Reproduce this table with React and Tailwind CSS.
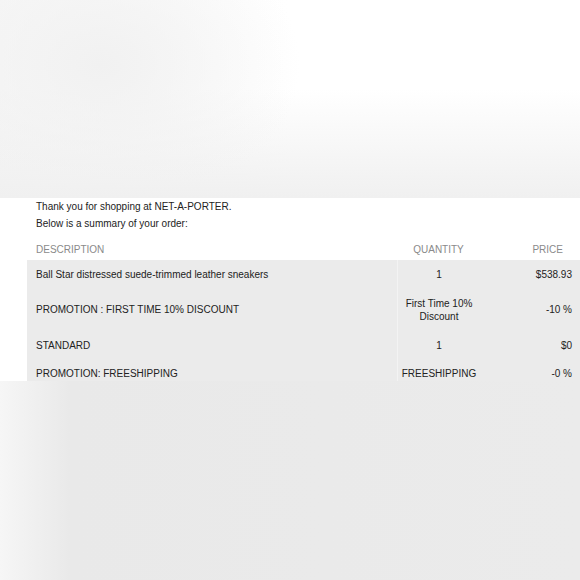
import React from 'react';

// order lines shown in the summary table
const LINES = [
  { id: 'l1', desc: 'Ball Star distressed suede-trimmed leather sneakers', qty: '1', price: '$538.93', h: 'h-[28px]' },
  { id: 'l2', desc: 'PROMOTION : FIRST TIME 10% DISCOUNT', qty: ['First Time 10%', 'Discount'], price: '-10 %', h: 'h-[43px]' },
  { id: 'l3', desc: 'STANDARD', qty: '1', price: '$0', h: 'h-[28px]' },
  { id: 'l4', desc: 'PROMOTION: FREESHIPPING', qty: 'FREESHIPPING', price: '-0 %', h: 'h-[28px]' },
];

const OrderRow = ({ line }) => (
  <div className={`grid grid-cols-[370px_83px_1fr] ${line.h}`}>
    <div className="flex items-center pl-[9px]">{line.desc}</div>
    <div className="flex items-center justify-center text-center leading-[13px] border-l border-[#f3f3f3]">
      {Array.isArray(line.qty) ? (
        <span>
          {line.qty[0]}
          <br />
          {line.qty[1]}
        </span>
      ) : (
        line.qty
      )}
    </div>
    <div className="flex items-center justify-end pr-2">{line.price}</div>
  </div>
);

const App = () => {
  return (
    <div className="w-[580px] h-[580px] overflow-hidden font-['Liberation_Sans',Arial,sans-serif] text-[10px] text-[#222]">
      {/* blurred backdrop above */}
      <div className="h-[198px] bg-[radial-gradient(ellipse_200px_150px_at_100px_65px,#f1f1f1_0%,rgba(255,255,255,0)_100%),linear-gradient(to_bottom,rgba(240,240,240,0)_45%,#f0f0f0_100%),linear-gradient(to_right,#f7f7f7_0%,#ffffff_50%)]" />

      {/* the email snippet */}
      <div className="h-[183px] bg-white overflow-hidden pl-[27px]">
        <div className="pl-[9px] leading-[17px]">
          <p>Thank you for shopping at NET-A-PORTER.</p>
          <p>Below is a summary of your order:</p>
        </div>
        <div className="grid grid-cols-[370px_83px_1fr] h-[22px] mt-[6px] text-[#8a8a8a]">
          <div className="flex items-center pl-[9px]">DESCRIPTION</div>
          <div className="flex items-center justify-center">QUANTITY</div>
          <div className="flex items-center justify-end pr-[17px]">PRICE</div>
        </div>
        <div className="bg-[#ebebeb]">
          {LINES.map((line) => (
            <OrderRow key={line.id} line={line} />
          ))}
        </div>
      </div>

      {/* blurred backdrop below */}
      <div className="h-[199px] bg-[linear-gradient(to_right,#f6f6f6_0%,#e9e9e9_70px,#ebebeb_100%)]" />
    </div>
  );
};

export default App;
